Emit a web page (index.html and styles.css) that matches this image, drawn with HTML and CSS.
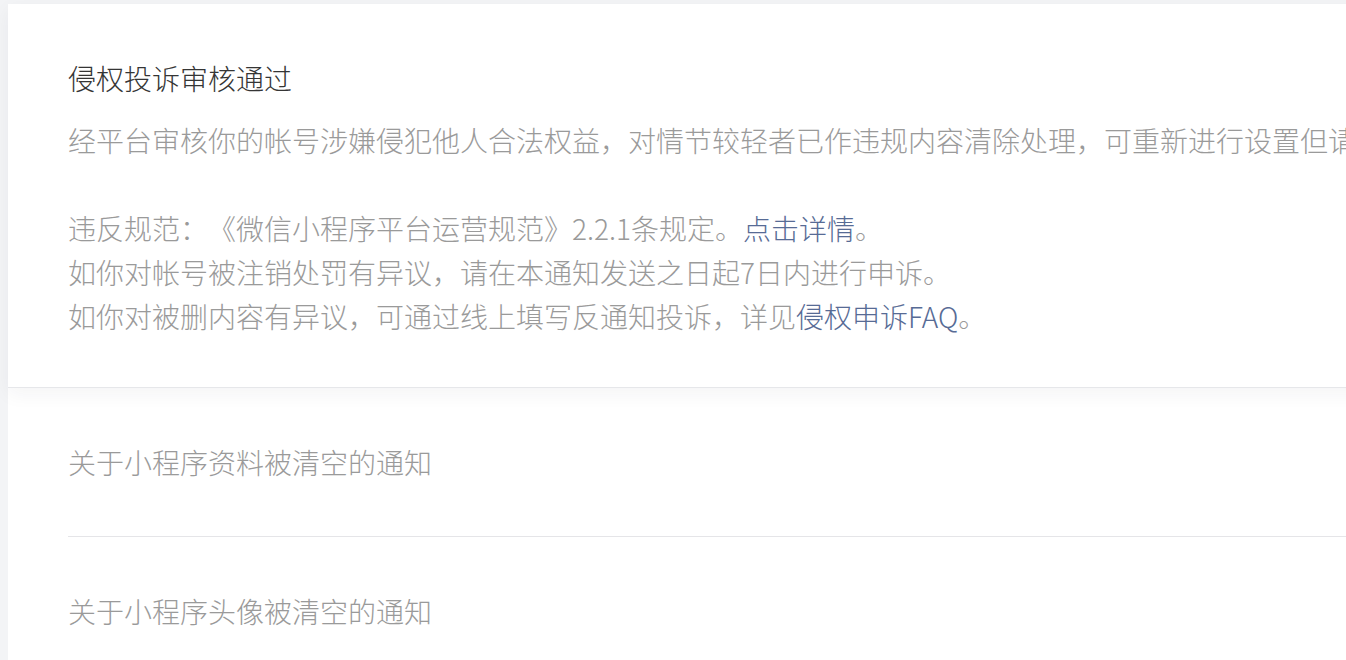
FILE: index.html
```html
<!DOCTYPE html>
<html lang="zh-CN">
<head>
<meta charset="utf-8">
<title>通知</title>
<link rel="stylesheet" href="styles.css">
</head>
<body>
<div class="page">
  <section class="card">
    <h1 class="title">侵权投诉审核通过</h1>
    <p class="line nowrap">经平台审核你的帐号涉嫌侵犯他人合法权益，对情节较轻者已作违规内容清除处理，可重新进行设置但请勿再次违规。</p>
    <p class="line blank">&nbsp;</p>
    <p class="line">违反规范：《微信小程序平台运营规范》2.2.1条规定。<a class="link" href="#">点击详情</a>。</p>
    <p class="line">如你对帐号被注销处罚有异议，请在本通知发送之日起7日内进行申诉。</p>
    <p class="line">如你对被删内容有异议，可通过线上填写反通知投诉，详见<a class="link" href="#">侵权申诉FAQ</a>。</p>
  </section>
  <ul class="list">
    <li class="item">关于小程序资料被清空的通知</li>
    <li class="item">关于小程序头像被清空的通知</li>
  </ul>
</div>
</body>
</html>
```
FILE: styles.css
```css
html, body {
  margin: 0;
  padding: 0;
  background: #f3f4f6;
  overflow: hidden;
  height: 100%;
}
body {
  font-family: "Noto Sans CJK SC", "Noto Sans", sans-serif;
  font-weight: 300;
  text-spacing-trim: space-all;
}
.page {
  padding: 4px 0 0 8px;
  width: 1600px;
}
.card {
  position: relative;
  z-index: 1;
  background: #fff;
  padding: 52px 0 49px 60px;
  border-bottom: 1px solid #e6e7ea;
  box-shadow: 0 6px 18px rgba(30, 40, 60, 0.05);
}
.title {
  margin: 0 0 18px;
  font-size: 28px;
  line-height: 44px;
  font-weight: 300;
  color: #353535;
}
.line {
  margin: 0;
  font-size: 28px;
  line-height: 44px;
  color: #9a9a9a;
}
.nowrap {
  white-space: nowrap;
}
.link {
  color: #576b95;
  text-decoration: none;
}
.list {
  list-style: none;
  margin: 0;
  padding: 0 0 0 60px;
  background: #fff;
  min-height: 400px;
}
.item {
  padding: 52px 0;
  font-size: 28px;
  line-height: 44px;
  color: #9a9a9a;
  border-bottom: 1px solid #e5e5e8;
}
.item:last-child {
  border-bottom: none;
}
```
